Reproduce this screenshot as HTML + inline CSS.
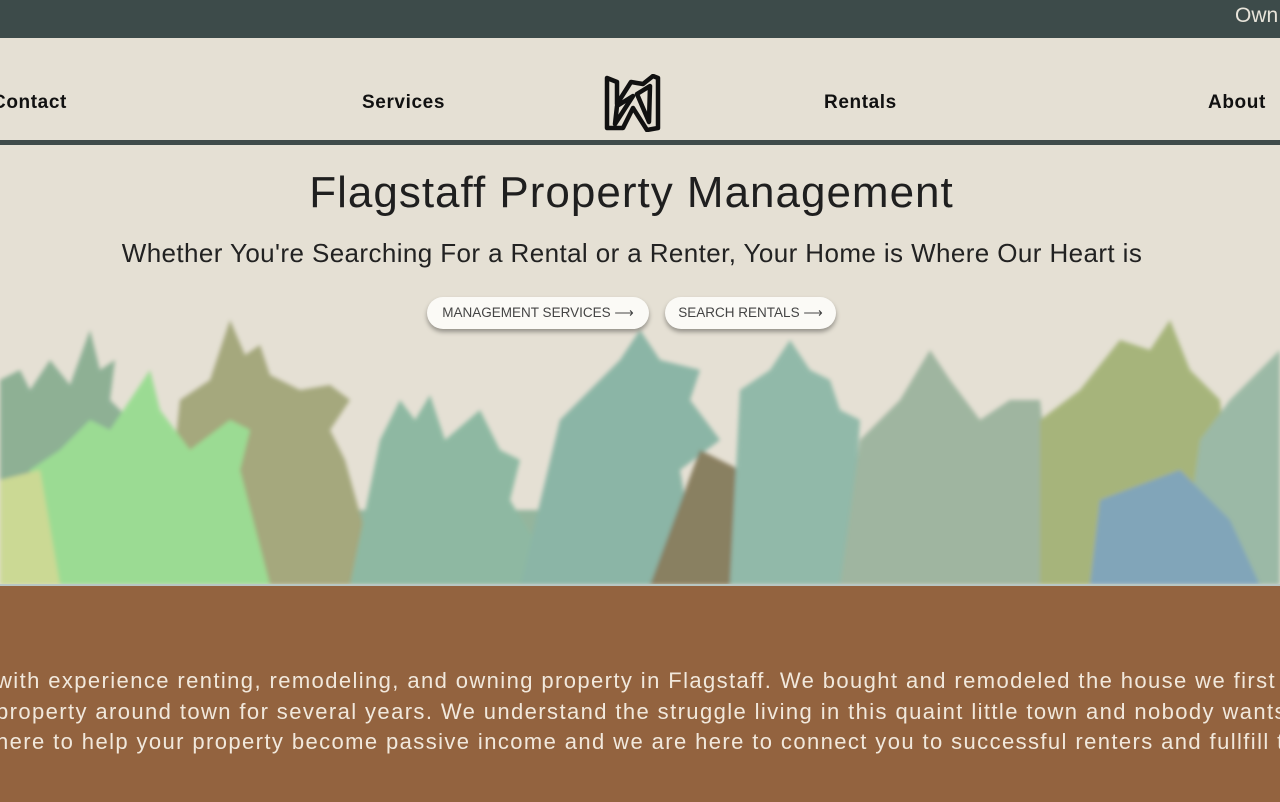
<!DOCTYPE html>
<html><head><meta charset="utf-8"><style>
body{margin:0;width:1280px;height:800px;overflow:hidden;background:#e5e0d4;font-family:"Liberation Sans",sans-serif;position:relative}
.top{position:absolute;left:0;top:0;width:1280px;height:38px;background:#3d4b4a}
.top span{position:absolute;left:1235px;top:4px;color:#e8e4da;font-size:21px}
.nav a{position:absolute;top:92px;font-weight:bold;font-size:19px;color:#111;text-decoration:none;letter-spacing:.6px}
.line{position:absolute;left:0;top:140px;width:1280px;height:5px;background:#3f4b4a}
h1{position:absolute;left:0;width:1263px;top:168px;margin:0;text-align:center;font-weight:normal;font-size:44px;color:#1f1f1f;letter-spacing:1px}
h2{position:absolute;left:0;width:1264px;top:238px;margin:0;text-align:center;font-weight:normal;font-size:26px;color:#222;letter-spacing:.4px}
.btn{position:absolute;top:297px;height:32px;border-radius:16px;background:#fbfaf6;box-shadow:0 3px 5px rgba(0,0,0,.35);font-size:13.5px;color:#444;line-height:32px;text-align:center;z-index:3}
.brown{position:absolute;left:0;top:584px;width:1280px;height:216px;background:#93633f;border-top:2px solid #b9c7c3}
.brown p{position:absolute;margin:0;left:-4px;color:#f1e8dc;font-size:22px;white-space:nowrap;line-height:30.5px;top:80px;letter-spacing:1.4px}
svg{position:absolute;left:0;top:310px}
</style></head><body>
<div class="top"><span>Own</span></div>
<div class="nav"><a style="left:-8px">Contact</a><a style="left:362px">Services</a><a style="left:824px">Rentals</a><a style="left:1208px">About</a></div>
<svg style="left:603px;top:74px" width="58" height="58" viewBox="0 0 58 58"><path d="M4 4 L14 8 L14 30 L28 8 L40 10 L50 2 L55 4 L55 54 L44 56 L30 34 L20 54 L4 54 Z M14 32 L12 50 L30 22 Z M34 20 L46 48 L47 12 Z" fill="none" stroke="#111" stroke-width="4.5" stroke-linejoin="round"/></svg>
<div class="line"></div>
<h1>Flagstaff Property Management</h1>
<h2>Whether You're Searching For a Rental or a Renter, Your Home is Where Our Heart is</h2>
<div class="btn" style="left:427px;width:222px">MANAGEMENT SERVICES ⟶</div>
<div class="btn" style="left:665px;width:171px">SEARCH RENTALS ⟶</div>
<svg width="1280" height="275" viewBox="0 310 1280 275">
<defs><filter id="b"><feGaussianBlur stdDeviation="2"/></filter></defs>
<g opacity=".85" filter="url(#b)">
<rect x="0" y="510" width="1280" height="75" fill="#86ae94"/>
<path d="M0 380 L20 370 L30 390 L50 360 L70 385 L90 330 L100 370 L115 360 L110 400 L130 420 L150 390 L160 420 L180 460 L140 585 L0 585Z" fill="#7fa88a"/>
<path d="M180 400 L210 380 L230 320 L245 355 L260 345 L270 375 L300 390 L330 385 L350 400 L330 430 L345 460 L380 585 L160 585Z" fill="#9a9f6e"/>
<path d="M30 470 L60 450 L90 420 L110 430 L150 370 L160 410 L190 450 L230 420 L250 430 L240 470 L270 585 L0 585Z" fill="#8fdb88"/>
<path d="M380 440 L400 400 L415 420 L430 395 L445 440 L480 410 L500 450 L520 460 L510 500 L560 585 L350 585Z" fill="#7fb29a"/>
<path d="M560 420 L600 380 L620 360 L640 330 L660 360 L700 370 L690 400 L720 440 L680 470 L700 585 L520 585Z" fill="#7cae9e"/>
<path d="M700 450 L740 470 L780 500 L820 585 L650 585Z" fill="#7a6f4e"/>
<path d="M740 390 L770 370 L790 340 L810 370 L830 380 L840 410 L860 420 L850 585 L730 585Z" fill="#83b3a2"/>
<path d="M860 440 L900 400 L930 350 L950 380 L980 420 L1010 400 L1040 400 L1060 585 L840 585Z" fill="#93ae97"/>
<path d="M1040 420 L1080 390 L1120 340 L1150 350 L1170 320 L1190 370 L1220 400 L1230 500 L1260 585 L1040 585Z" fill="#9cad6c"/>
<path d="M1200 440 L1230 400 L1250 380 L1280 350 L1280 585 L1180 585Z" fill="#8fb39e"/>
<path d="M1100 500 L1180 470 L1230 520 L1260 585 L1090 585Z" fill="#6f9bb5"/>
<path d="M0 480 L40 470 L60 585 L0 585Z" fill="#c7d88a"/>
</g></svg>
<div class="brown"><p>with experience renting, remodeling, and owning property in Flagstaff. We bought and remodeled the house we first r<br>property around town for several years. We understand the struggle living in this quaint little town and nobody wants<br>here to help your property become passive income and we are here to connect you to successful renters and fullfill th</p></div>
</body></html>
